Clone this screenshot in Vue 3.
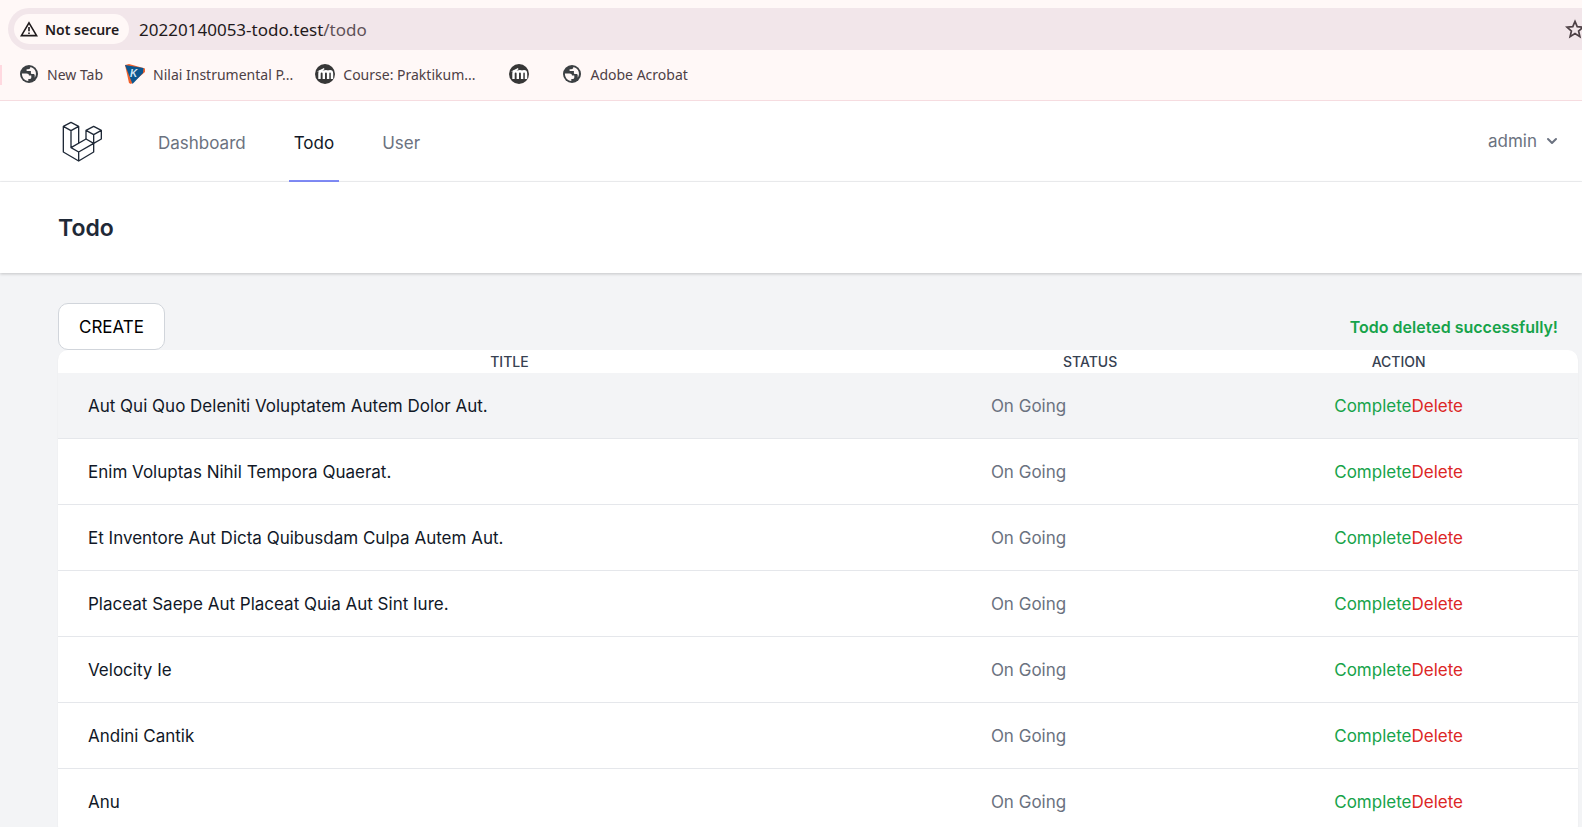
<script setup>
const bookmarks = [
  { label: 'New Tab', icon: 'globe' },
  { label: 'Nilai Instrumental P...', icon: 'kite' },
  { label: 'Course: Praktikum...', icon: 'moodle' },
  { label: '', icon: 'moodle' },
  { label: 'Adobe Acrobat', icon: 'globe' },
]

const links = [
  { label: 'Dashboard', active: false },
  { label: 'Todo', active: true },
  { label: 'User', active: false },
]

const todos = [
  'Aut Qui Quo Deleniti Voluptatem Autem Dolor Aut.',
  'Enim Voluptas Nihil Tempora Quaerat.',
  'Et Inventore Aut Dicta Quibusdam Culpa Autem Aut.',
  'Placeat Saepe Aut Placeat Quia Aut Sint Iure.',
  'Velocity Ie',
  'Andini Cantik',
  'Anu',
]
</script>

<template>
  <div class="window">
    <div class="chrome">
      <div class="address-bar">
        <button class="security" type="button">
          <svg width="18" height="16" viewBox="0 0 18 16" fill="none" stroke="#1f1a1c">
            <path d="M9 1.8 16.6 14.6H1.4Z" stroke-width="1.6" />
            <path d="M9 6v4.2M9 11.4v1.6" stroke-width="1.6" />
          </svg>
          Not secure
        </button>
        <a class="url" href="#">20220140053-todo.test<span>/todo</span></a>
        <button class="star" type="button" aria-label="Bookmark this tab">
          <svg width="20" height="20" viewBox="0 0 20 20" fill="none" stroke="#4d4045" stroke-width="1.7">
            <path d="M10 2.4 12.2 7.7 18 8.2 13.6 12 14.9 17.6 10 14.6 5.1 17.6 6.4 12 2 8.2 7.8 7.7Z" />
          </svg>
        </button>
      </div>
      <nav class="bookmarks" aria-label="Bookmarks">
        <a v-for="(b, i) in bookmarks" :key="i" href="#" :class="{ 'icon-only': !b.label }" :aria-label="b.label || 'Course'">
          <svg v-if="b.icon === 'globe'" width="20" height="20" viewBox="0 0 20 20">
            <circle cx="10" cy="10" r="9" fill="#3c4043" />
            <path d="M2.900 9.600h4.600c1.700 0 2.500.8 2.500 2h2.300v1.800c0 .9-.7 1.500-1.600 1.500H9.300v2.200C5.400 16.800 2.900 13.600 2.900 9.600Z" fill="#fff8f7" />
            <path d="M11.400 3.100c-.1 1.400-.9 2.200-2.300 2.200H7.600v1.700h4.300v2c0 .7.500 1.100 1.200 1.100h1.300c.8 0 1.300.6 1.300 1.400v2.300C18.300 10.200 17 4.400 11.400 3.100Z" fill="#fff8f7" />
          </svg>
          <svg v-else-if="b.icon === 'kite'" width="20" height="20" viewBox="0 0 20 20">
            <path d="M0 1 4 0 20 4.500V8L6 20 4 19Z" fill="#f0622d" />
            <path d="M0 1 18.500 4 18 9 7.500 20Z" fill="#0b568f" />
            <text x="5" y="13" class="kite-letter">K</text>
          </svg>
          <svg v-else width="20" height="20" viewBox="0 0 20 20">
            <circle cx="10" cy="10" r="10" fill="#373737" />
            <path d="M4.500 15V9.500c0-3 4.300-3 4.300 0V15M8.800 9.500c0-3 4.300-3 4.300 0V15M13.100 9.500c0-3 3.900-3 3.900 0V15" fill="none" stroke="#fff" stroke-width="2.400" />
            <path d="M2 7.500 9 4 9.500 5.200 6 7.500Z" fill="#fff" />
          </svg>
          <span v-if="b.label">{{ b.label }}</span>
        </a>
      </nav>
    </div>

    <header class="navbar">
      <a class="logo" href="#" aria-label="Home">
        <svg width="41" height="41" viewBox="186 63 123 123" fill="none" stroke="#1f2937" stroke-width="4" stroke-linejoin="round">
          <path d="M190 79 213 67 236 79 213 92ZM190 79V156L236 183 281 156V130L236 156 213 143V92M236 79V131M213 143 258 117 281 130M236 156V183" />
          <path d="M258 91 281 79 304 91 281 104ZM258 91V117M304 91V117L281 130V104" />
        </svg>
      </a>
      <nav class="links">
        <a v-for="l in links" :key="l.label" href="#" :class="{ active: l.active }">{{ l.label }}</a>
      </nav>
      <button class="account" type="button">
        admin
        <svg width="20" height="20" viewBox="0 0 20 20" fill="#6b7280">
          <path d="M5.293 7.293a1 1 0 0 1 1.414 0L10 10.586l3.293-3.293a1 1 0 1 1 1.414 1.414l-4 4a1 1 0 0 1-1.414 0l-4-4a1 1 0 0 1 0-1.414z" />
        </svg>
      </button>
    </header>

    <section class="heading">
      <h1>Todo</h1>
    </section>

    <main>
      <div class="toolbar">
        <a class="create" href="#">CREATE</a>
        <p class="notice">Todo deleted successfully!</p>
      </div>
      <table>
        <thead>
          <tr>
            <th class="col-title">TITLE</th>
            <th class="col-status">STATUS</th>
            <th class="col-action">ACTION</th>
          </tr>
        </thead>
        <tbody>
          <tr v-for="t in todos" :key="t">
            <td><a class="title" href="#">{{ t }}</a></td>
            <td class="status">On Going</td>
            <td class="action"><button class="complete" type="button">Complete</button><button class="delete" type="button">Delete</button></td>
          </tr>
        </tbody>
      </table>
    </main>
  </div>
</template>

<style>
html,
body {
  margin: 0;
  overflow: hidden;
}
</style>

<style scoped>
.window {
  height: 100vh;
  overflow: hidden;
  background: #f3f4f6;
  font-family: Inter, "Liberation Sans", sans-serif;
  font-size: 17px;
  line-height: 25px;
}
a {
  color: inherit;
  text-decoration: none;
}
button {
  padding: 0;
  border: 0;
  background: none;
  font: inherit;
  color: inherit;
  cursor: pointer;
}
svg {
  flex: none;
  display: block;
}
.chrome {
  overflow: hidden;
  padding-top: 8px;
  background: #fff8f7;
  border-bottom: 1px solid #f6dce0;
  font-family: "Noto Sans", "Open Sans", sans-serif;
}
.address-bar {
  display: flex;
  align-items: center;
  height: 42px;
  margin-left: 8px;
  padding-left: 6px;
  border-radius: 21px 0 0 21px;
  background: #f2e6ea;
}
.security {
  display: flex;
  align-items: center;
  gap: 7px;
  height: 30px;
  padding: 0 10px 0 6px;
  border-radius: 15px;
  background: #fff8f7;
  font-size: 14px;
  font-weight: 600;
  color: #1f1a1c;
}
.url {
  margin-left: 10px;
  font-size: 17px;
  color: #1f1a1c;
}
.url span {
  color: #5f5258;
}
.star {
  margin-left: auto;
  margin-right: -3px;
}
.bookmarks {
  display: flex;
  align-items: center;
  height: 48px;
  gap: 22px;
  padding: 0 0 2px 19px;
  font-size: 14px;
  color: #4d4045;
  position: relative;
}
.bookmarks::before {
  content: "";
  position: absolute;
  left: 0;
  top: 15px;
  width: 2px;
  height: 20px;
  background: #ffd9e0;
}
.bookmarks a {
  display: flex;
  align-items: center;
  gap: 8px;
}
.bookmarks .icon-only {
  margin: 0 11px 0 12px;
}
.kite-letter {
  font: italic bold 10px "Liberation Sans", sans-serif;
  fill: #d4e6f3;
}
.navbar {
  display: flex;
  align-items: stretch;
  height: 80px;
  padding: 0 20px 0 62px;
  background: #fff;
  border-bottom: 1px solid #f0f1f3;
}
.logo {
  display: flex;
  align-items: center;
  margin-right: 50px;
}
.links {
  display: flex;
  gap: 38px;
  margin-bottom: -1px;
  color: #6b7280;
}
.links a {
  display: flex;
  align-items: center;
  padding: 6px 5px 0;
  border-bottom: 2px solid transparent;
}
.links .active {
  border-color: #818cf8;
  color: #111827;
}
.account {
  display: flex;
  align-items: center;
  gap: 5px;
  margin-left: auto;
  color: #6b7280;
}
.heading {
  position: relative;
  padding: 31px 58px 29px;
  background: #fff;
  box-shadow: 0 1px 3px rgba(0, 0, 0, 0.2);
}
h1 {
  margin: 0;
  font-size: 23px;
  line-height: 31px;
  font-weight: 600;
  color: #1f2937;
}
main {
  padding: 30px 4px 0 58px;
}
.toolbar {
  display: flex;
  align-items: baseline;
  justify-content: space-between;
  padding-right: 20px;
}
.create {
  padding: 11px 20px 9px;
  border: 1px solid #d1d5db;
  border-radius: 10px;
  background: #fff;
  color: #000;
}
.notice {
  margin: 0;
  font-size: 16px;
  font-weight: 600;
  color: #16a34a;
}
table {
  width: 100%;
  table-layout: fixed;
  border-collapse: separate;
  border-spacing: 0;
  border-radius: 10px;
  overflow: hidden;
  background: #fff;
  box-shadow: 0 1px 2px rgba(0, 0, 0, 0.06);
}
th {
  height: 23px;
  padding: 0;
  font-size: 14px;
  line-height: 20px;
  font-weight: 500;
  color: #374151;
}
.col-title {
  width: 59.4%;
}
.col-status {
  width: 17%;
}
td {
  height: 63px;
  padding: 2px 30px 0;
  border-bottom: 1px solid #e5e7eb;
}
tbody tr:first-child {
  background: #f3f4f6;
}
.title {
  color: #111827;
}
.status {
  color: #6b7280;
}
.action {
  text-align: center;
}
.complete {
  color: #16a34a;
}
.delete {
  color: #dc2626;
}
</style>
